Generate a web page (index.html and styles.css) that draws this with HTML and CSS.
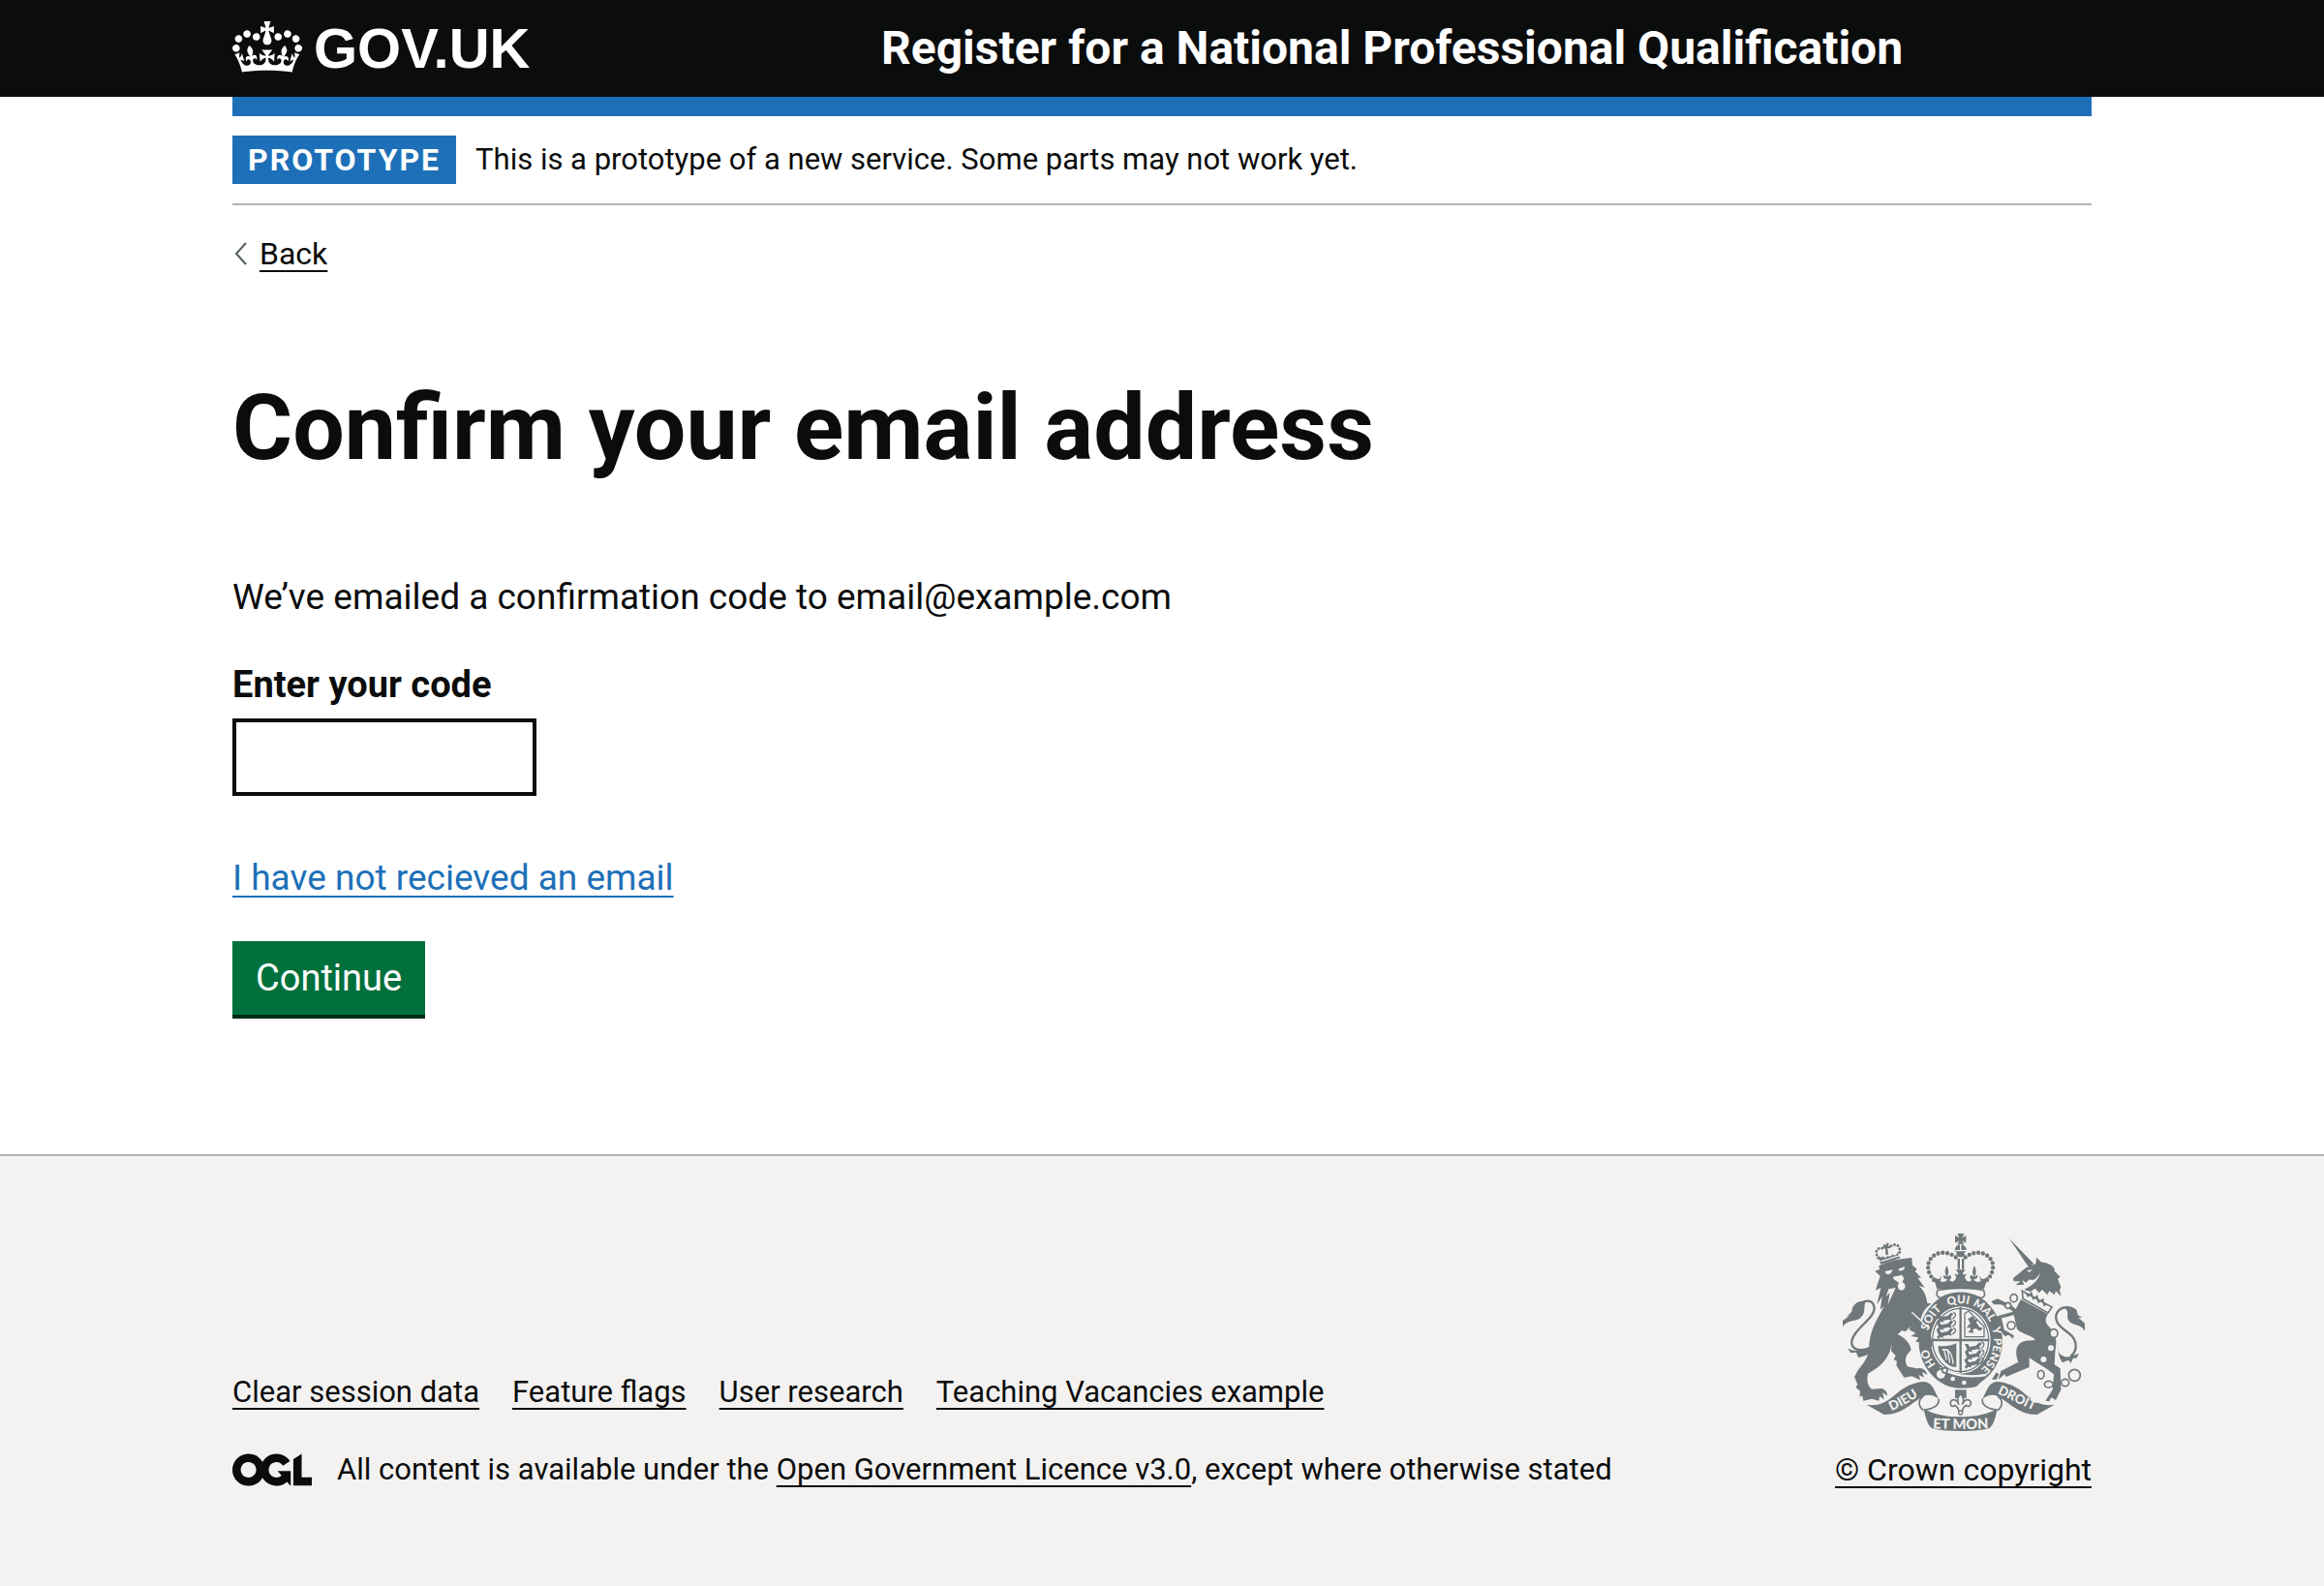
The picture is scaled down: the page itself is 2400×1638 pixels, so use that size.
FILE: index.html
```html
<!DOCTYPE html>
<html lang="en">
<head>
<meta charset="utf-8">
<meta name="viewport" content="width=device-width, initial-scale=1">
<title>Confirm your email address</title>
<link rel="stylesheet" href="styles.css">
</head>
<body>
<header class="header">
  <div class="container header-row">
    <a class="logo" href="#">
      <svg class="logo-crown" viewBox="0 0 132 97" aria-hidden="true"><path fill="currentColor" fill-rule="evenodd" d="M25 30.2c3.5 1.5 7.7-.2 9.1-3.7 1.5-3.6-.2-7.8-3.9-9.2-3.6-1.4-7.6.3-9.1 3.9-1.4 3.5.3 7.5 3.9 9zM9 39.5c3.6 1.5 7.8-.2 9.2-3.7 1.5-3.6-.2-7.8-3.9-9.1-3.6-1.5-7.6.2-9.1 3.8-1.4 3.5.3 7.5 3.8 9zM4.4 57.2c3.5 1.5 7.7-.2 9.1-3.8 1.5-3.6-.2-7.7-3.9-9.1-3.5-1.5-7.6.3-9.1 3.8-1.4 3.5.3 7.6 3.9 9.1zm38.3-21.4c3.5 1.5 7.7-.2 9.1-3.8 1.5-3.6-.2-7.7-3.9-9.1-3.6-1.5-7.6.3-9.1 3.8-1.3 3.6.4 7.7 3.9 9.1zm64.4-5.6c-3.6 1.5-7.8-.2-9.1-3.7-1.5-3.6.2-7.8 3.8-9.2 3.6-1.4 7.7.3 9.2 3.9 1.3 3.5-.4 7.5-3.9 9zm15.9 9.3c-3.6 1.5-7.7-.2-9.1-3.7-1.5-3.6.2-7.8 3.7-9.1 3.6-1.5 7.7.2 9.2 3.8 1.5 3.5-.3 7.5-3.8 9zm4.7 17.7c-3.6 1.5-7.8-.2-9.2-3.8-1.5-3.6.2-7.7 3.9-9.1 3.6-1.5 7.7.3 9.2 3.8 1.3 3.5-.4 7.6-3.9 9.1zM89.3 35.8c-3.6 1.5-7.8-.2-9.2-3.8-1.4-3.6.2-7.7 3.9-9.1 3.6-1.5 7.7.3 9.2 3.8 1.4 3.6-.3 7.7-3.9 9.1zM69.7 17.7l8.9 4.7V9.3l-8.9 2.8c-.2-.3-.5-.6-.9-.9L72.4 0H59.6l3.5 11.2c-.3.3-.6.5-.9.9l-8.8-2.8v13.1l8.8-4.7c.3.3.6.7.9.9l-5 15.4v.1c-.2.8-.4 1.6-.4 2.4 0 4.1 3.1 7.5 7 8.1h.2c.3 0 .7.1 1 .1.4 0 .7 0 1-.1h.2c4-.6 7.1-4.1 7.1-8.1 0-.8-.1-1.7-.4-2.4V34l-5.1-15.4c.4-.2.7-.6 1-.9zM66 92.8c16.9 0 32.8 1.1 47.1 3.2 4-16.9 8.9-26.7 14-33.5l-9.6-3.4c1 4.9 1.1 7.2 0 10.2-1.5-1.4-3-4.3-4.2-8.7L108.6 76c2.8-2 5-3.2 7.5-3.3-4.4 9.4-10 11.9-13.6 11.2-4.3-.8-6.3-4.6-5.6-7.9 1-4.7 5.7-5.9 8-.5 4.3-8.7-3-11.4-7.6-8.8 7.1-7.2 7.9-13.5 2.1-21.1-8 6.1-8.1 12.3-4.5 20.8-4.7-5.4-12.1-2.5-9.5 6.2 3.4-5.2 7.9-2 7.2 3.1-.6 4.3-6.4 7.8-13.5 7.2-10.3-.9-10.9-8-11.2-13.8 2.5-.5 7.1 1.8 11 7.3L80.2 60c-4.1 4.4-8 5.3-12.3 5.4 1.4-4.4 8-11.6 8-11.6H55.5s6.4 7.2 7.9 11.6c-4.2-.1-8-1-12.3-5.4l1.4 16.4c3.9-5.5 8.5-7.7 10.9-7.3-.3 5.8-.9 12.8-11.1 13.8-7.2.6-12.9-2.9-13.5-7.2-.7-5 3.8-8.3 7.1-3.1 2.7-8.7-4.6-11.6-9.4-6.2 3.7-8.5 3.6-14.7-4.6-20.8-5.8 7.6-5 13.9 2.2 21.1-4.7-2.6-11.9.1-7.7 8.8 2.3-5.5 7.1-4.2 8.1.5.7 3.3-1.3 7.1-5.7 7.9-3.5.7-9-1.8-13.5-11.2 2.5.1 4.7 1.3 7.5 3.3l-4.7-15.4c-1.2 4.4-2.7 7.2-4.3 8.7-1.1-3-.9-5.3 0-10.2l-9.5 3.4c5 6.9 9.9 16.7 14 33.5 14.8-2.1 30.8-3.2 47.7-3.2z"/></svg>
      <span class="logo-text">GOV.UK</span>
    </a>
    <a class="service-name" href="#">Register for a National Professional Qualification</a>
  </div>
</header>

<div class="container">
  <div class="phase-banner">
    <strong class="tag">PROTOTYPE</strong>
    <span>This is a prototype of a new service. Some parts may not work yet.</span>
  </div>
  <a class="back-link" href="#">
    <svg class="back-arrow" viewBox="0 0 14 24" aria-hidden="true"><path d="M13 1 3 12l10 11" fill="none" stroke="#505a5f" stroke-width="2"/></svg>
    <span class="link-text">Back</span>
  </a>

  <main class="main">
    <h1 class="heading">Confirm your email address</h1>
    <form class="form">
      <p class="body-text">We’ve emailed a confirmation code to email@example.com</p>
      <label class="label" for="code">Enter your code</label>
      <input class="input" id="code" name="code" type="text">
      <p class="body-text"><a class="help-link" href="#">I have not recieved an email</a></p>
      <button class="button" type="submit">Continue</button>
    </form>
  </main>
</div>

<footer class="footer">
  <div class="container footer-row">
    <div class="footer-meta">
      <ul class="footer-links">
        <li><a href="#">Clear session data</a></li>
        <li><a href="#">Feature flags</a></li>
        <li><a href="#">User research</a></li>
        <li><a href="#">Teaching Vacancies example</a></li>
      </ul>
      <div class="licence">
        <svg class="ogl" viewBox="0 0 483.2 195.7" role="img" aria-label="Open Government Licence"><path fill="currentColor" d="M421.5 142.8V.1l-50.7 32.3v161.1h112.4v-50.7zm-122.3-9.6A47.12 47.12 0 0 1 221 97.8c0-26 21.1-47.1 47.1-47.1 16.7 0 31.4 8.7 39.7 21.8l42.7-27.2A97.63 97.63 0 0 0 268.1 0c-36.5 0-68.3 20.1-85.1 49.7A98 98 0 0 0 97.8 0C43.9 0 0 43.9 0 97.8s43.9 97.8 97.8 97.8c36.5 0 68.3-20.1 85.1-49.7a97.76 97.76 0 0 0 149.6 25.4l19.4 22.2h3v-87.8h-80l24.3 27.5zM97.8 145c-26 0-47.1-21.1-47.1-47.1s21.1-47.1 47.1-47.1 47.1 21.1 47.1 47.1S123.8 145 97.8 145"/></svg>
        <span>All content is available under the <a href="#">Open Government Licence v3.0</a>, except where otherwise stated</span>
      </div>
    </div>
    <a class="copyright" href="#">
      <svg class="crest" viewBox="72 72 750 612" aria-hidden="true">
        <defs>
          <path id="garter" d="M437 516A103 114 0 0 1 437 288A103 114 0 0 1 437 516"/>
          <path id="dieu" d="M205 629Q264 606 322 564"/>
          <path id="mon" d="M345 675Q437 681 530 675"/>
          <path id="droit" d="M538 561Q606 594 676 626"/>
          <g id="crown-half">
            <path d="M366 226C336 204 330 172 343 152C362 124 400 126 425 148" fill="none" stroke="#6f777b" stroke-width="13" stroke-linecap="round" stroke-dasharray="0 14.500"/>
            <path d="M438 243H364L352 205Q372 224 380 198L374 220Q392 226 397 214Q380 212 385 200L394 206Q384 190 394 172Q405 190 395 206L405 200Q412 210 402 216Q416 228 424 208L418 196L428 200L430 194L422 184H438Z"/>
          </g>
          <g id="ribbon">
            <path d="M146 602Q190 610 230 575C260 548 290 532 325 531Q348 534 358 562L369 584Q345 566 322 576C285 596 255 634 200 633Z"/>
            <path d="M322 576C306 586 304 606 322 620M369 584C374 604 350 616 326 618" fill="none" stroke="#6f777b" stroke-width="5"/>
            <path d="M322 614Q366 640 438 640V684Q380 684 350 676C332 664 330 640 322 614Z"/>
          </g>
          <g id="small-lion">
            <path d="M362 322h10l5 9 20-4 10-10 8 4-8 10 3 10-10-3-18 4 4 5-12-2-5 6-6-6 6-6Z"/>
            <path d="M414 316q12 4 5 14l-7 6" fill="none" stroke="#6f777b" stroke-width="4"/>
          </g>
        </defs>
        <g fill="#6f777b">
          <path d="M427 72h21l-6 13 12-7v23l-12-7 6 10h-21l6-10-13 7V78l13 7Z"/>
          <path d="M419 126Q420 106 437 105Q454 106 456 126L448 132Q454 142 440 145H434Q420 140 426 132Z"/>
          <path d="M419 125h38M437 105v20" stroke="#f3f2f1" stroke-width="4"/>
          <path d="M428 150h7v32h-7zM441 150h7v32h-7z"/>
          <use href="#crown-half"/>
          <use href="#crown-half" transform="matrix(-1 0 0 1 874 0)"/>
          <ellipse cx="437" cy="402" rx="130" ry="149"/>
          <path d="M366 247Q437 236 508 247Q518 268 500 272Q437 240 374 272Q358 266 366 247Z" fill="#f3f2f1" stroke="#6f777b" stroke-width="5"/>
          <ellipse cx="437" cy="402" rx="93" ry="104" fill="#f3f2f1"/>
          <ellipse cx="437" cy="402" rx="87" ry="98" fill="none" stroke="#6f777b" stroke-width="4"/>
          <path d="M437 300v204M348 402h178" stroke="#6f777b" stroke-width="7"/>
          <use href="#small-lion"/>
          <use href="#small-lion" y="24"/>
          <use href="#small-lion" y="48"/>
          <use href="#small-lion" x="88" y="92"/>
          <use href="#small-lion" x="88" y="116"/>
          <use href="#small-lion" x="86" y="140"/>
          <path d="M450 392V320L462 312L510 360V392Z" fill="none" stroke="#6f777b" stroke-width="4"/>
          <path d="M460 336l14-8 8 10 8 0-4 10 10 14 10 2-8 10-14-8-10 4 4 10-18-2 8-8-2-8-10 4 6-12 6-2Z"/>
          <path d="M368 420Q400 424 424 412V486Q398 486 380 458Q366 440 368 420Z"/>
          <path d="M380 432Q410 426 414 476M386 434l8 30M396 430l8 42" fill="none" stroke="#f3f2f1" stroke-width="4"/>
          <path d="M372 488Q438 524 516 510" fill="none" stroke="#f3f2f1" stroke-width="7"/>
          <path d="M374 494Q438 528 516 516L486 546Q434 560 384 528Z"/>
          <circle cx="376" cy="508" r="17" fill="#f3f2f1" stroke="#6f777b" stroke-width="7"/>
          <circle cx="388" cy="496" r="8" fill="#f3f2f1" stroke="#6f777b" stroke-width="5"/>
          <circle cx="413" cy="522" r="7" fill="#f3f2f1"/>
          <circle cx="448" cy="534" r="7" fill="#f3f2f1"/>

          <!-- Lion -->
          <path d="M192 168L186 142L247 126L253 148Z" fill="#f3f2f1"/>
          <path d="M190 168L182 140Q192 150 196 142Q204 152 212 140Q220 148 226 136Q236 146 242 130L250 148Z"/>
          <path d="M190 158L249 140" stroke="#f3f2f1" stroke-width="4"/>
          <path d="M182 148C166 124 186 108 204 122M248 130C254 106 228 98 214 118" fill="none" stroke="#6f777b" stroke-width="9" stroke-linecap="round" stroke-dasharray="0 11"/>
          <path d="M199 104l8 3 2-7 6 3-2 7 8 2-2 6-8-1 2 20-8 1-1-18-7-4Z"/>
          <path d="M172 188L186 183L184 172Q230 150 286 147L288 170L302 182L296 188L315 210L304 209L326 239L308 234C330 254 332 276 334 288L347 289C328 302 318 318 314 338L290 320L330 356C346 378 348 400 350 422L336 420L338 430L322 432L326 418L308 422L314 408L298 408L306 394L284 390L298 380L278 370L282 360L266 376L256 372L242 384C262 394 280 410 284 432C270 448 260 458 272 484L300 490Q328 484 334 510L318 500L324 518L308 510L312 526L286 514L262 518L238 480L240 468L230 462L236 450L222 436L224 414C216 460 190 484 150 506C146 526 148 542 162 554L192 552Q210 556 210 576L196 564L200 586L186 576L184 590L162 584L136 590L132 574L124 578L126 560L112 548L118 540L108 516L120 494C144 466 156 446 154 412C160 360 184 330 200 296L188 308L194 268L178 292L190 240L174 248Q182 220 188 204Z"/>
          <path d="M202 190L226 184Q224 200 208 198ZM244 182L264 174Q264 188 248 188ZM228 206L256 200L262 212L256 222C272 230 266 246 254 248C242 246 240 234 246 224L230 214Z" fill="#f3f2f1"/>
          <path d="M214 244L206 268L218 254L212 292L236 240Z" fill="#f3f2f1"/>
          <path d="M286 316L340 366" stroke="#f3f2f1" stroke-width="4"/>
          <path d="M135 284C166 272 180 300 160 328C140 354 96 384 100 414C104 434 134 438 156 426" fill="none" stroke="#6f777b" stroke-width="7"/>
          <path d="M144 282C118 278 100 294 100 314L84 330L94 326L72 342V360C90 336 118 346 130 330C146 314 134 296 144 282ZM160 420Q120 446 88 428L96 442L114 440L120 456Q148 452 162 438Z"/>

          <!-- Unicorn -->
          <path d="M587 86L664 166L648 176ZM600 210L640 178L670 166L672 146L686 160C716 164 732 178 728 188L746 206L738 212L748 238L744 246L748 266L732 250L728 262L712 250L706 262L690 246L680 256L668 242L654 252L634 246Q680 222 684 192Q670 222 650 214L640 224L628 216L634 230L608 232L622 220L602 220Z"/>
          <path d="M642 186L660 184L650 192Z" fill="#f3f2f1"/>
          <path d="M628 250L720 300L708 318L630 274ZM640 256l6 10 10-10 6 18 12-8 4 18 14-8 4 18 10-4" fill="none" stroke="#6f777b" stroke-width="5"/>
          <path d="M624 276L708 322Q690 344 716 366C738 394 734 410 730 440L728 478L746 490L748 556L732 588L718 580L712 592L700 590L722 556L726 508C700 486 674 474 650 456L650 486L578 516L574 508L554 524L562 498L616 470C604 438 608 410 640 404L668 402C660 386 630 386 612 368L602 324L582 330L564 334L572 370L602 388L600 398L586 386L574 390L556 366L548 330L556 326L600 314L590 306L562 292L540 292L532 282L552 274L594 294L608 306Z"/>
          <path d="M548 502L534 524H548L556 508Z"/>
          <g fill="#f3f2f1">
            <circle cx="717" cy="427" r="9"/><circle cx="694" cy="462" r="9"/>
            <g stroke="#6f777b" stroke-width="5">
              <ellipse cx="602" cy="272" rx="11" ry="12"/><ellipse cx="584" cy="295" rx="9" ry="9"/><ellipse cx="594" cy="357" rx="12" ry="12"/><ellipse cx="726" cy="381" rx="12" ry="13"/>
              <ellipse cx="686" cy="509" rx="10" ry="13"/><ellipse cx="710" cy="539" rx="13" ry="10"/><ellipse cx="761" cy="534" rx="12" ry="11"/><circle cx="790" cy="511" r="18"/>
            </g>
          </g>
          <path d="M784 304C748 292 724 316 736 346C750 376 796 380 794 424Q792 442 778 452" fill="none" stroke="#6f777b" stroke-width="7"/>
          <path d="M758 302C796 296 798 308 800 324L814 332L802 332L822 350V374C808 348 780 360 770 338C764 324 776 312 758 302ZM738 418C734 444 752 456 772 454L804 444L796 458L786 458L778 474L772 464L752 472Q738 450 738 418Z"/>

          <use href="#ribbon"/>
          <use href="#ribbon" transform="matrix(-1 0 0 1 874 0)"/>
          <path d="M420 556h35v26h-35Z"/>
          <path d="M437 568Q452 584 442 602C450 580 470 584 469 600Q464 612 454 604L446 612L442 622H432L428 612L420 604Q408 612 406 600C404 584 424 580 432 602Q422 584 437 568Z" fill="#f3f2f1" stroke="#6f777b" stroke-width="5"/>
          <circle cx="437" cy="627" r="6" fill="#f3f2f1" stroke="#6f777b" stroke-width="4"/>
          <g class="crest-text" fill="#f3f2f1">
            <text class="garter-text"><textPath href="#garter" startOffset="17%">HO</textPath></text>
            <text class="garter-text"><textPath href="#garter" startOffset="35%">SOIT</textPath></text>
            <text class="garter-text"><textPath href="#garter" startOffset="49%">QUI</textPath></text>
            <text class="garter-text"><textPath href="#garter" startOffset="61%">MAL</textPath></text>
            <text class="garter-text"><textPath href="#garter" startOffset="71%">Y</textPath></text>
            <text class="garter-text"><textPath href="#garter" startOffset="82%">PENSE</textPath></text>
            <text class="ribbon-text"><textPath href="#dieu" startOffset="50%">DIEU</textPath></text>
            <text class="motto-text"><textPath href="#mon" startOffset="50%">ET MON</textPath></text>
            <text class="ribbon-text"><textPath href="#droit" startOffset="50%">DROIT</textPath></text>
          </g>
        </g>
      </svg>
      <span class="link-text">© Crown copyright</span>
    </a>
  </div>
</footer>
</body>
</html>
```
FILE: styles.css
```css
* {
  box-sizing: border-box;
}

html {
  background: #f3f2f1;
}

body {
  margin: 0;
  background: #fff;
  color: #0b0c0c;
  font-family: Roboto, "Liberation Sans", sans-serif;
  font-size: 31px;
  line-height: 40px;
}

a {
  color: inherit;
  text-decoration: underline;
  text-decoration-thickness: 2px;
  text-decoration-skip-ink: none;
  text-underline-offset: 6px;
}

.container {
  max-width: 1920px;
  margin: 0 auto;
}

.header {
  background: linear-gradient(#0b0c0c 100px, #fff 100px);
  color: #fff;
}

.header-row {
  display: grid;
  grid-template-columns: 1fr 2fr;
  align-items: center;
  height: 120px;
  border-bottom: 20px solid #1d70b8;
}

.header a {
  text-decoration: none;
}

.logo {
  display: flex;
  align-items: center;
  gap: 12px;
}

.logo-crown {
  width: 72px;
  height: 53px;
  margin-bottom: 4px;
}

.logo-text {
  font-family: "Liberation Sans", sans-serif;
  font-size: 58px;
  font-weight: 700;
  line-height: 60px;
}

.service-name {
  padding-left: 30px;
  font-size: 48px;
  font-weight: 700;
  line-height: 60px;
}

.phase-banner {
  display: flex;
  align-items: center;
  gap: 20px;
  padding: 20px 0;
  border-bottom: 2px solid #b1b4b6;
}

.tag {
  padding: 5px 16px;
  background: #1d70b8;
  color: #fff;
  font-size: 32px;
  letter-spacing: 2px;
}

.back-link {
  display: inline-flex;
  align-items: center;
  gap: 12px;
  margin-top: 30px;
  text-decoration: none;
}

.back-arrow {
  width: 16px;
  height: 24px;
}

.link-text {
  font-size: 32px;
  text-decoration: underline;
  text-decoration-thickness: 2px;
  text-underline-offset: 6px;
  text-decoration-skip-ink: none;
}

.main {
  padding: 108px 0 144px;
}

.heading {
  margin: 0 0 100px;
  font-size: 95px;
  font-weight: 700;
  line-height: 100px;
}

.form {
  display: flex;
  flex-direction: column;
  align-items: flex-start;
}

.body-text,
.label,
.button {
  font-size: 37px;
  line-height: 50px;
}

.body-text {
  margin: 0 0 40px;
}

.label {
  margin-bottom: 10px;
  font-size: 38px;
  font-weight: 700;
}

.input {
  width: 314px;
  height: 80px;
  margin-bottom: 60px;
  padding: 10px;
  border: 4px solid #0b0c0c;
  border-radius: 0;
  background: #fff;
  font: inherit;
}

.help-link {
  color: #1d70b8;
}

.button {
  padding: 13px 24px;
  border: 0;
  background: #00703c;
  box-shadow: 0 4px 0 #002d18;
  color: #fff;
  font-family: inherit;
  font-size: 38px;
}

.footer {
  padding: 80px 0;
  border-top: 2px solid #b1b4b6;
  background: #f3f2f1;
}

.footer-row {
  display: flex;
  align-items: flex-end;
  justify-content: space-between;
}

.footer-links {
  display: flex;
  gap: 34px;
  margin: 0 0 40px;
  padding: 0;
  list-style: none;
}

.licence {
  display: flex;
  align-items: center;
  gap: 26px;
}

.ogl {
  width: 82px;
  height: 34px;
}

.copyright {
  display: flex;
  flex-direction: column;
  align-items: center;
  gap: 20px;
  text-decoration: none;
}

.crest {
  width: 250px;
  height: 204px;
}

.crest-text {
  font-family: Lato, sans-serif;
  font-weight: 900;
  text-anchor: middle;
}

.garter-text {
  font-size: 35px;
}

.ribbon-text {
  font-size: 40px;
}

.motto-text {
  font-size: 44px;
}
```
